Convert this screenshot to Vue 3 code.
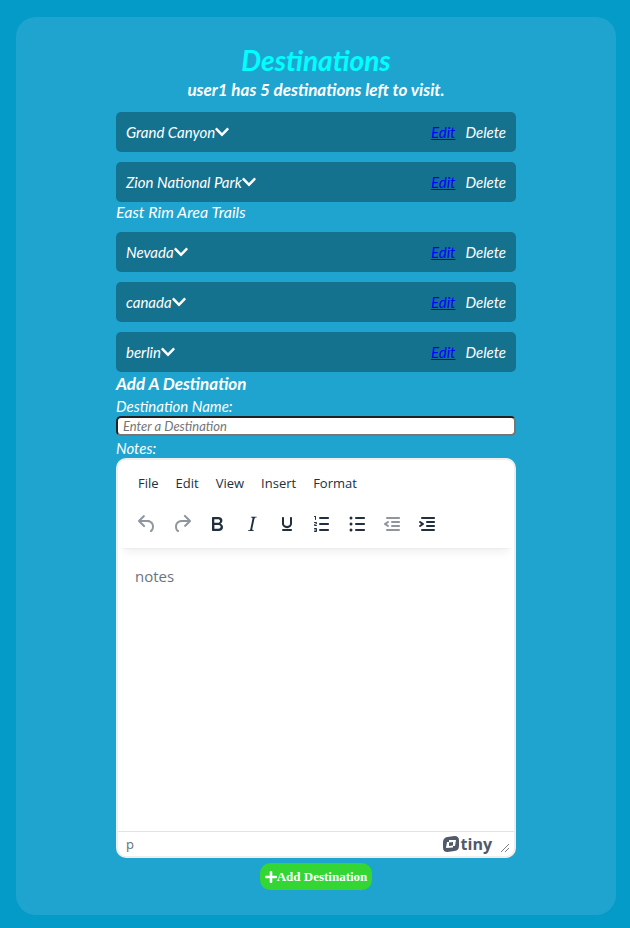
<script setup>
import { ref } from 'vue'

const user = 'user1'
const destinations = ref([
  { name: 'Grand Canyon', details: '' },
  { name: 'Zion National Park', details: 'East Rim Area Trails' },
  { name: 'Nevada', details: '' },
  { name: 'canada', details: '' },
  { name: 'berlin', details: '' }
])
const newName = ref('')
const notes = ref('')

const menus = ['File', 'Edit', 'View', 'Insert', 'Format']
const lines = 'M10 17h8c.6 0 1 .4 1 1s-.4 1-1 1h-8a1 1 0 0 1 0-2Zm0-6h8c.6 0 1 .4 1 1s-.4 1-1 1h-8a1 1 0 0 1 0-2Zm0-6h8c.6 0 1 .4 1 1s-.4 1-1 1h-8a1 1 0 1 1 0-2Z'
const indentLines = 'M7 5h12c.6 0 1 .4 1 1s-.4 1-1 1H7a1 1 0 1 1 0-2Zm5 4h7c.6 0 1 .4 1 1s-.4 1-1 1h-7a1 1 0 0 1 0-2Zm0 4h7c.6 0 1 .4 1 1s-.4 1-1 1h-7a1 1 0 0 1 0-2Zm-5 4h12a1 1 0 0 1 0 2H7a1 1 0 0 1 0-2Z'
const tools = [
  { label: 'Undo', disabled: true, d: 'M6.4 8H12c3.7 0 6.2 2 6.8 5.1.6 2.7-.4 5.6-2.3 6.8a1 1 0 0 1-1-1.8c1.1-.6 1.8-2.7 1.4-4.6-.5-2.1-2.1-3.5-4.9-3.5H6.4l3.3 3.3a1 1 0 1 1-1.4 1.4l-5-5a1 1 0 0 1 0-1.4l5-5a1 1 0 0 1 1.4 1.4L6.4 8Z' },
  { label: 'Redo', disabled: true, d: 'M17.6 10H12c-2.8 0-4.4 1.4-4.9 3.5-.4 2 .3 4 1.4 4.6a1 1 0 1 1-1 1.8c-2-1.2-2.9-4.1-2.3-6.8.6-3 3-5.1 6.8-5.1h5.6l-3.3-3.3a1 1 0 1 1 1.4-1.4l5 5a1 1 0 0 1 0 1.4l-5 5a1 1 0 0 1-1.4-1.4l3.3-3.3Z' },
  { label: 'Bold', d: 'M7.8 19c-.3 0-.5 0-.6-.2l-.2-.5V5.7c0-.2 0-.4.2-.5l.6-.2h5c1.5 0 2.7.3 3.5 1 .7.6 1.1 1.4 1.1 2.5a3 3 0 0 1-.6 1.9c-.4.6-1 1-1.6 1.2.4.1.9.3 1.3.6s.8.7 1 1.2c.4.4.5 1 .5 1.6 0 1.3-.4 2.3-1.3 3-.8.7-2.1 1-3.8 1H7.8Zm5-8.3c.6 0 1.2-.1 1.6-.5.4-.3.6-.7.6-1.3 0-1.1-.8-1.7-2.3-1.7H9.3v3.5h3.4Zm.5 6c.7 0 1.3-.1 1.7-.4.4-.4.6-.9.6-1.5s-.2-1-.7-1.4c-.4-.3-1-.4-2-.4H9.4v3.8h4Z' },
  { label: 'Italic', d: 'm16.7 4.7-.1.9h-.3c-.6 0-1 0-1.4.3-.3.3-.4.6-.5 1.1l-2.1 9.8v.6c0 .5.4.8 1.4.8h.2l-.2.8H8l.2-.8h.2c1.1 0 1.8-.5 2-1.5l2-9.8.1-.5c0-.6-.4-.8-1.4-.8h-.3l.2-.9h5.8Z' },
  { label: 'Underline', d: 'M16 5c.6 0 1 .4 1 1v5.5a4 4 0 0 1-.4 1.8l-1 1.4a5.3 5.3 0 0 1-5.5 1 5 5 0 0 1-1.6-1c-.5-.4-.8-.9-1.1-1.4a4 4 0 0 1-.4-1.8V6c0-.6.4-1 1-1s1 .4 1 1v5.5c0 .3 0 .6.2 1l.6.7a3.3 3.3 0 0 0 2.2.8 3.4 3.4 0 0 0 2.2-.8c.3-.2.4-.5.6-.8l.2-.9V6c0-.6.4-1 1-1ZM8 17h8c.6 0 1 .4 1 1s-.4 1-1 1H8a1 1 0 0 1 0-2Z' },
  { label: 'Numbered list', d: lines + 'M6 4v3.5c0 .3-.2.5-.5.5a.5.5 0 0 1-.5-.5V5h-.5a.5.5 0 0 1 0-1H6Zm-1 8.8.2.2h1.3c.3 0 .5.2.5.5s-.2.5-.5.5H4.9a1 1 0 0 1-.9-1V13c0-.4.3-.8.6-1l1.2-.4.2-.3a.2.2 0 0 0-.2-.2H4.5a.5.5 0 0 1-.5-.5c0-.3.2-.5.5-.5h1.6c.5 0 .9.4.9 1v.1c0 .4-.3.8-.6 1l-1.2.4-.2.3ZM7 17v2c0 .6-.4 1-1 1H4.5a.5.5 0 0 1 0-1h1.2c.2 0 .3-.1.3-.3 0-.2-.1-.3-.3-.3H4.4a.4.4 0 1 1 0-.8h1.3c.2 0 .3-.1.3-.3 0-.2-.1-.3-.3-.3H4.5a.5.5 0 1 1 0-1H6c.6 0 1 .4 1 1Z' },
  { label: 'Bullet list', d: 'M11 5h8c.6 0 1 .4 1 1s-.4 1-1 1h-8a1 1 0 0 1 0-2Zm0 6h8c.6 0 1 .4 1 1s-.4 1-1 1h-8a1 1 0 0 1 0-2Zm0 6h8c.6 0 1 .4 1 1s-.4 1-1 1h-8a1 1 0 0 1 0-2ZM4.5 6a1.5 1.5 0 1 1 3 0 1.5 1.5 0 0 1-3 0Zm0 6a1.5 1.5 0 1 1 3 0 1.5 1.5 0 0 1-3 0Zm0 6a1.5 1.5 0 1 1 3 0 1.5 1.5 0 0 1-3 0Z' },
  { label: 'Decrease indent', disabled: true, d: indentLines + 'm1.6-3.8a1 1 0 0 1-1.2 1.6l-3-2a1 1 0 0 1 0-1.6l3-2a1 1 0 0 1 1.2 1.6L6.8 12l1.8 1.2Z' },
  { label: 'Increase indent', d: indentLines + 'm-2.6-3.8L6.2 12l-1.8-1.2a1 1 0 0 1 1.2-1.6l3 2a1 1 0 0 1 0 1.6l-3 2a1 1 0 1 1-1.2-1.6Z' }
]

function remove(index) {
  destinations.value.splice(index, 1)
}

function add() {
  if (!newName.value) return
  destinations.value.push({ name: newName.value, details: notes.value })
  newName.value = ''
  notes.value = ''
}
</script>

<template>
  <main class="panel">
    <div class="column">
      <header class="heading">
        <h1>Destinations</h1>
        <h2>{{ user }} has {{ destinations.length }} destinations left to visit.</h2>
      </header>

      <ul class="list">
        <li v-for="(item, i) in destinations" :key="item.name">
          <div class="row">
            <button type="button" class="name">
              <span>{{ item.name }}</span>
              <svg viewBox="0 0 448 512" aria-hidden="true"><path d="M207 381.500 12.700 187.100c-9.400-9.400-9.400-24.500 0-33.900l22.700-22.700c9.300-9.300 24.500-9.400 33.900 0L224 284.500l154.700-154c9.400-9.400 24.600-9.300 33.900 0l22.700 22.700c9.400 9.400 9.400 24.500 0 33.900L241 381.500c-9.400 9.400-24.600 9.400-34 0Z" /></svg>
            </button>
            <a href="#edit">Edit</a>
            <button type="button" @click="remove(i)">Delete</button>
          </div>
          <p v-if="item.details">{{ item.details }}</p>
        </li>
      </ul>

      <form class="form" @submit.prevent="add">
        <h2>Add A Destination</h2>
        <label for="destination">Destination Name:</label>
        <input id="destination" v-model="newName" type="text" placeholder="Enter a Destination" />
        <label for="notes">Notes:</label>
        <div class="editor">
          <div class="editor-head">
            <div class="menubar">
              <button v-for="menu in menus" :key="menu" type="button">{{ menu }}</button>
            </div>
            <div class="toolbar">
              <button v-for="tool in tools" :key="tool.label" type="button" :aria-label="tool.label" :disabled="tool.disabled">
                <svg viewBox="0 0 24 24" aria-hidden="true"><path :d="tool.d" fill-rule="evenodd" /></svg>
              </button>
            </div>
          </div>
          <textarea id="notes" v-model="notes" placeholder="notes"></textarea>
          <div class="statusbar">
            <span class="path">p</span>
            <a class="brand" href="#tiny">
              <svg viewBox="0 0 16 16" aria-hidden="true">
                <path fill-rule="evenodd" d="M4.500 1 11.500 0Q16 0 16 4.500V9.500Q16 14.500 11.500 15L4.500 16Q0 16 0 11.500V6.500Q0 1.500 4.500 1ZM6 4V6H4L3 12 10 11.500V10H12L13 4ZM6 6.500 10 6V9.500L6 10Z" />
              </svg>
              <span>tiny</span>
            </a>
            <svg class="grip" viewBox="0 0 10 10" aria-hidden="true"><path d="m1 9 8-8M5 9l4-4" /></svg>
          </div>
        </div>
        <button type="submit" class="submit">
          <svg viewBox="0 0 448 512" aria-hidden="true"><path d="M416 208H272V64c0-17.700-14.300-32-32-32h-32c-17.700 0-32 14.300-32 32v144H32c-17.700 0-32 14.300-32 32v32c0 17.700 14.300 32 32 32h144v144c0 17.700 14.300 32 32 32h32c17.700 0 32-14.300 32-32V304h144c17.700 0 32-14.300 32-32v-32c0-17.700-14.300-32-32-32Z" /></svg>
          <span>Add Destination</span>
        </button>
      </form>
    </div>
  </main>
</template>

<style>
body {
  margin: 0;
  background: #059bc8;
}
</style>

<style scoped>
* {
  box-sizing: border-box;
}

h1, h2, p, ul {
  margin: 0;
  padding: 0;
}

button {
  border: 0;
  padding: 0;
  background: none;
  color: inherit;
  font: inherit;
  cursor: pointer;
}

.panel {
  margin: 17px 14px 13px 16px;
  padding: 25px 20px;
  border-radius: 20px;
  background: #1fa4cf;
  color: #fff;
  font: italic 16px/20px Lato, sans-serif;
}

.column {
  max-width: 400px;
  margin: 0 auto;
}

.heading {
  text-align: center;
}

h1 {
  color: #0ff;
  font-size: 28px;
  line-height: 36px;
}

h2 {
  font-size: 17px;
  line-height: 24px;
}

.list {
  display: grid;
  gap: 10px;
  padding-top: 10px;
  list-style: none;
}

.row {
  display: flex;
  align-items: center;
  gap: 10px;
  height: 40px;
  padding: 0 10px;
  border-radius: 5px;
  background: #15728f;
  font-size: 15px;
}

.row a {
  color: #00f;
}

.name {
  display: flex;
  align-items: center;
  margin-right: auto;
}

.name svg {
  width: 14px;
  height: 16px;
  fill: #fff;
}

.form {
  display: flex;
  flex-direction: column;
}

label {
  font-size: 15px;
}

input {
  height: 20px;
  margin-bottom: 2px;
  padding: 0 5px;
  border: 2px inset #767676;
  border-radius: 5px;
  background: #fff;
  font: italic 13px/16px Lato, sans-serif;
}

input::placeholder {
  color: #757575;
}

.editor {
  display: flex;
  flex-direction: column;
  height: 400px;
  border: 2px solid #eee;
  border-radius: 10px;
  background: #fff;
  color: #222f3e;
  font: 13px/20px "Open Sans", sans-serif;
  overflow: hidden;
}

.editor-head {
  padding: 3px 9px 4px;
  margin: 0 2px;
  box-shadow: 0 2px 2px -2px rgba(34, 47, 62, 0.1), 0 8px 8px -4px rgba(34, 47, 62, 0.07);
}

.menubar {
  display: flex;
  gap: 17px;
  height: 40px;
  padding: 0 9px;
}

.toolbar {
  display: flex;
  height: 41px;
}

.toolbar button {
  display: grid;
  place-items: center;
  width: 35px;
}

.toolbar svg {
  width: 24px;
  height: 24px;
  fill: #222f3e;
}

.toolbar button:disabled svg {
  opacity: 0.5;
}

textarea {
  flex: 1;
  padding: 17px;
  border: 0;
  resize: none;
  outline: 0;
  background: none;
  font: 15px/22px "Open Sans", sans-serif;
}

textarea::placeholder {
  color: #6b747e;
}

.statusbar {
  display: flex;
  align-items: center;
  height: 25px;
  padding: 0 4px 0 8px;
  border-top: 1px solid #e3e3e3;
  color: #646d78;
}

.brand {
  display: flex;
  align-items: center;
  gap: 2px;
  margin-left: auto;
  color: #505a69;
  font: 700 16px/20px "Open Sans", sans-serif;
  text-decoration: none;
}

.brand svg {
  width: 16px;
  height: 16px;
  fill: #505a69;
}

.grip {
  align-self: flex-end;
  width: 10px;
  height: 10px;
  margin: 0 0 3px 8px;
  fill: none;
  stroke: #7a828b;
}

.submit {
  display: flex;
  align-items: center;
  align-self: center;
  height: 27px;
  margin-top: 5px;
  padding: 0 5px;
  border-radius: 10px;
  background: #33d633;
  font: bold 13px/20px "Liberation Serif", serif;
}

.submit svg {
  width: 12px;
  height: 14px;
  fill: #fff;
}
</style>
